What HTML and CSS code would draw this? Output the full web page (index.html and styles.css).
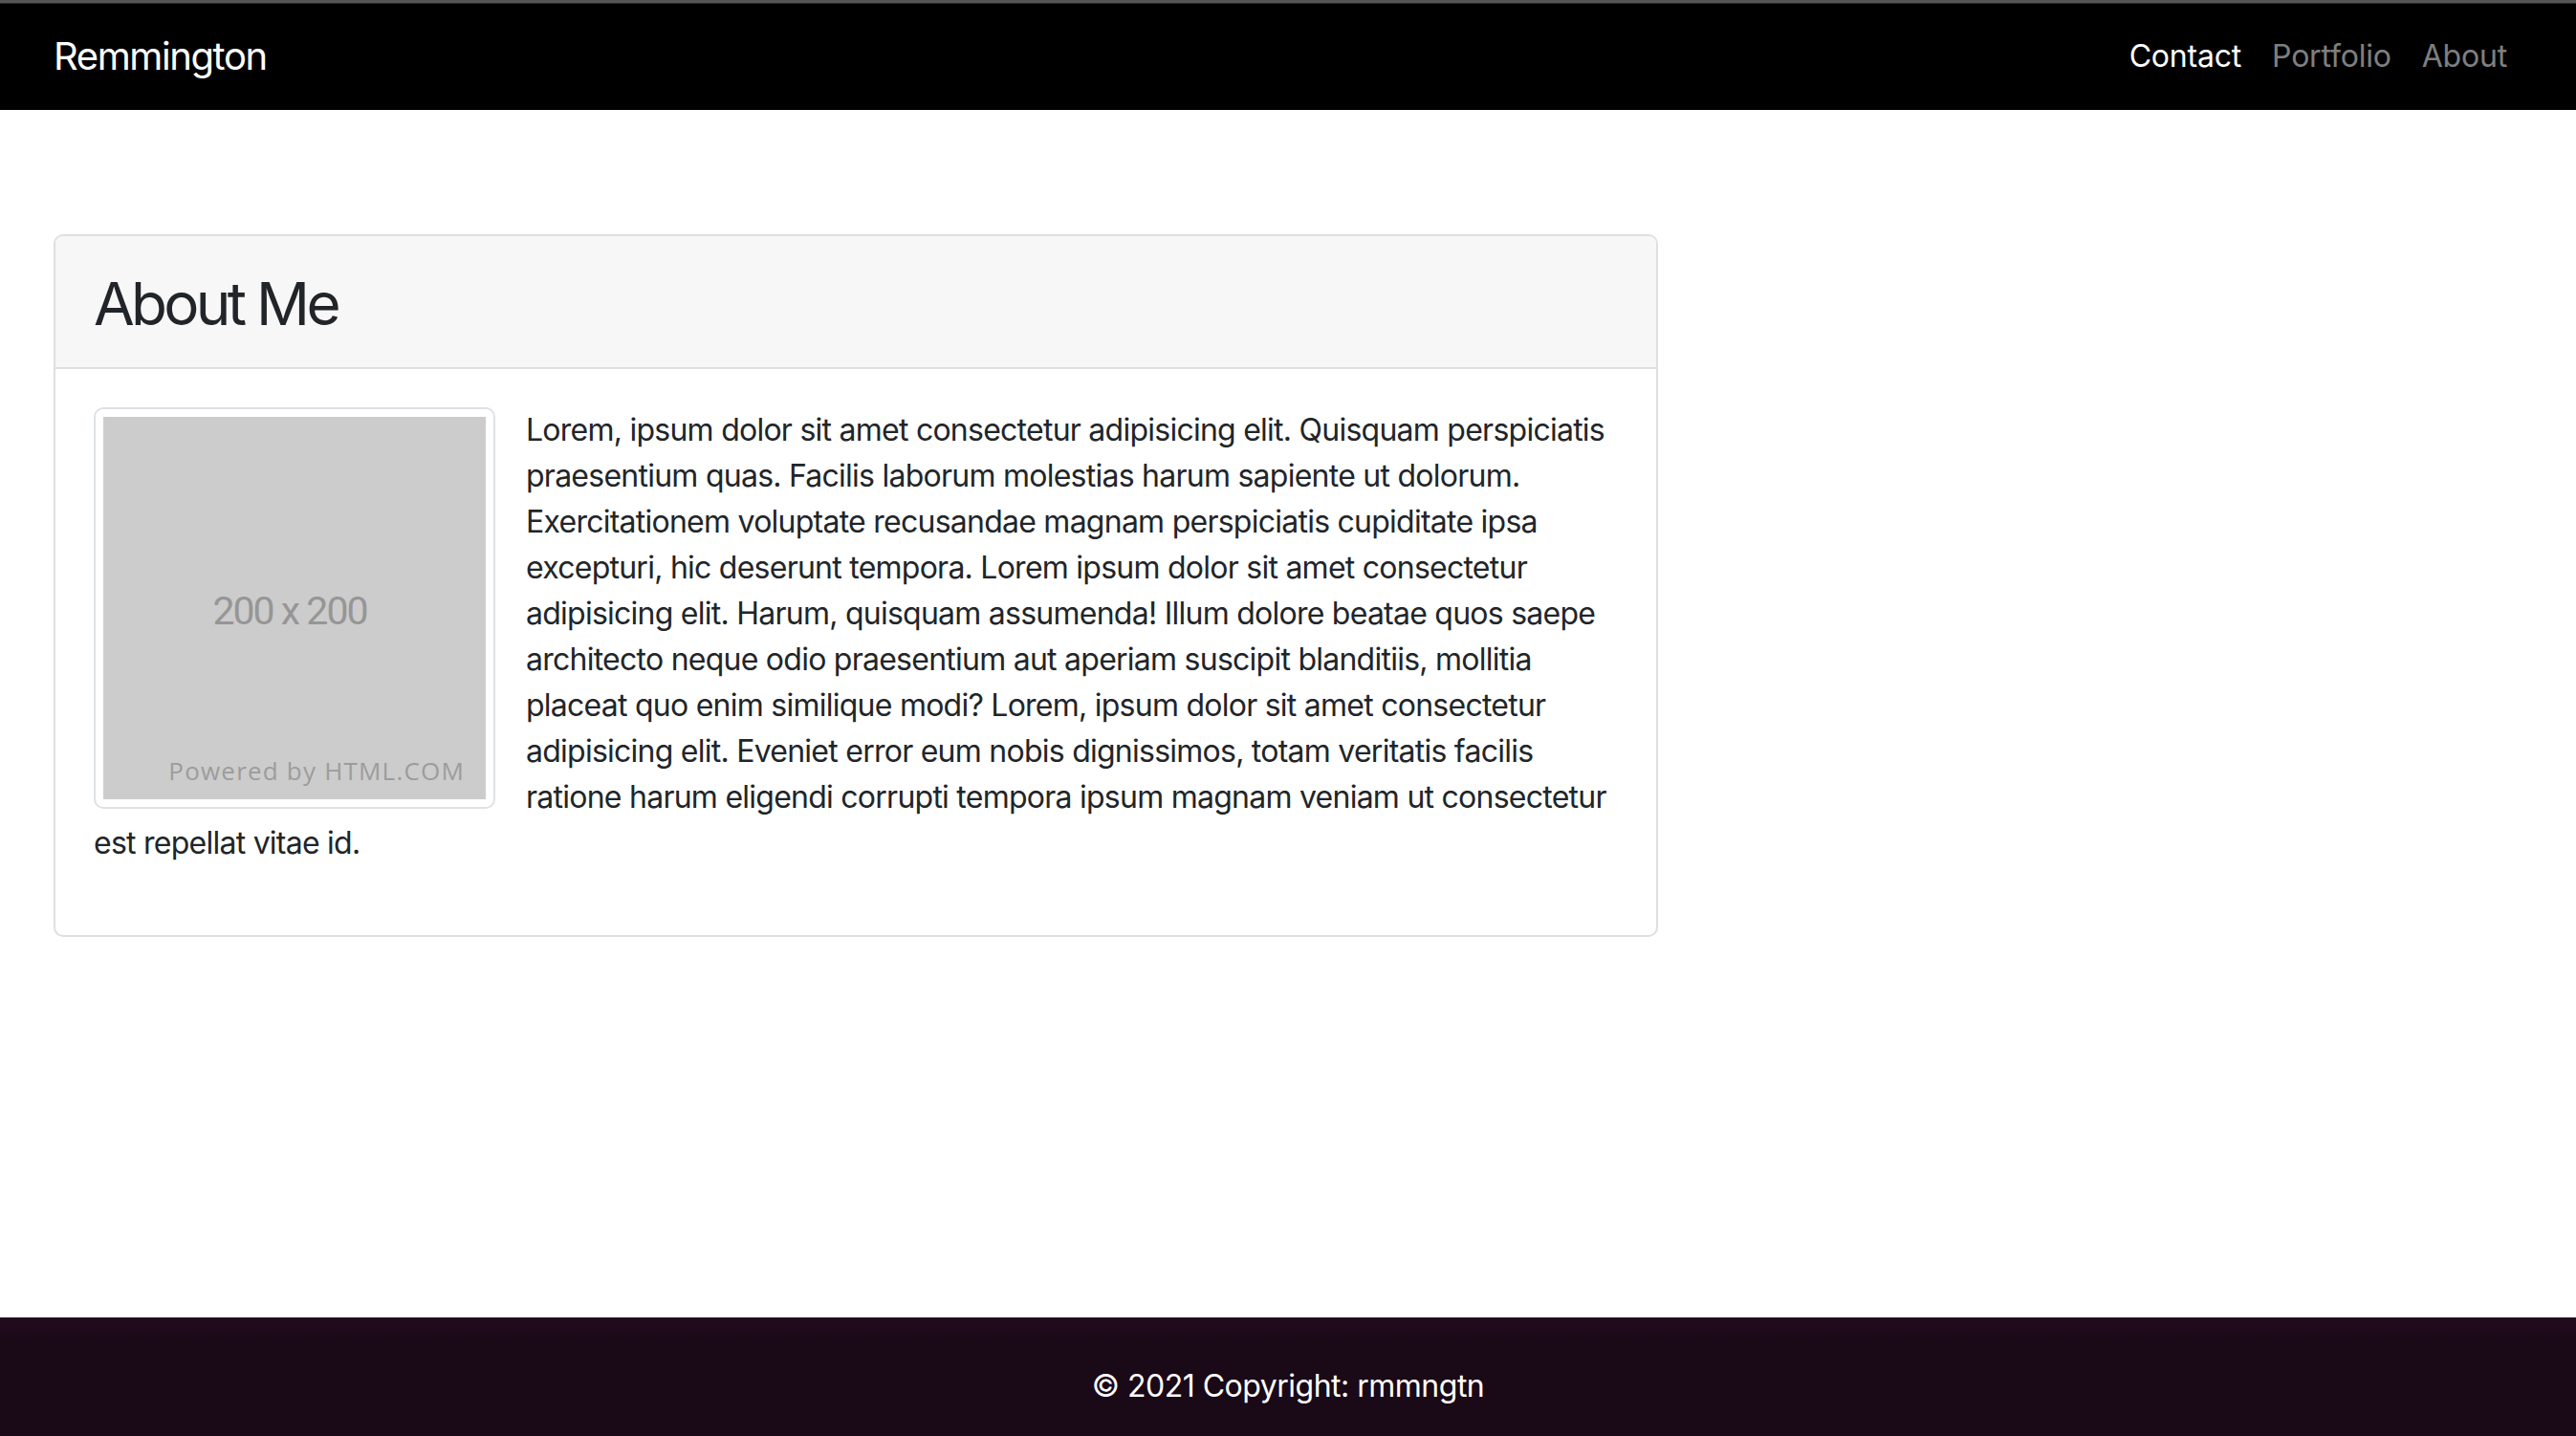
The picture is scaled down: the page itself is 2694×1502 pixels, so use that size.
FILE: index.html
```html
<!DOCTYPE html>
<html lang="en">
<head>
<meta charset="utf-8">
<title>Remmington</title>
<link rel="stylesheet" href="styles.css">
</head>
<body>
<header class="navbar">
  <a class="brand" href="#">Remmington</a>
  <nav class="nav">
    <a class="nav-link active" href="#">Contact</a>
    <a class="nav-link" href="#">Portfolio</a>
    <a class="nav-link" href="#">About</a>
  </nav>
</header>
<main class="main">
  <section class="card">
    <div class="card-header">
      <h2 class="title">About Me</h2>
    </div>
    <div class="card-body">
      <div class="thumb">
        <div class="placeholder">
          <span class="ph-size">200 x 200</span>
          <span class="ph-credit">Powered by HTML.COM</span>
        </div>
      </div>
      <p class="text">Lorem, ipsum dolor sit amet consectetur adipisicing elit. Quisquam perspiciatis praesentium quas. Facilis laborum molestias harum sapiente ut dolorum. Exercitationem voluptate recusandae magnam perspiciatis cupiditate ipsa excepturi, hic deserunt tempora. Lorem ipsum dolor sit amet consectetur adipisicing elit. Harum, quisquam assumenda! Illum dolore beatae quos saepe architecto neque odio praesentium aut aperiam suscipit blanditiis, mollitia placeat quo enim similique modi? Lorem, ipsum dolor sit amet consectetur adipisicing elit. Eveniet error eum nobis dignissimos, totam veritatis facilis ratione harum eligendi corrupti tempora ipsum magnam veniam ut consectetur est repellat vitae id.</p>
    </div>
  </section>
</main>
<footer class="footer">© 2021 Copyright: rmmngtn</footer>
</body>
</html>
```

FILE: styles.css
```css
* { box-sizing: border-box; }
html, body { margin: 0; padding: 0; }
body {
  font-family: Inter, "Noto Sans", "Liberation Sans", sans-serif;
  color: #212529;
  background: #fff;
  min-height: 100vh;
  display: flex;
  flex-direction: column;
}
a { text-decoration: none; }

.navbar {
  background: #000;
  border-top: 3px solid #555;
  box-shadow: inset 0 1px 0 #2a2a2a;
  height: 115px;
  display: flex;
  align-items: center;
  justify-content: space-between;
  padding: 0 56px 0 56px;
}
.brand {
  color: #fff;
  font-size: 40px;
  line-height: 60px;
  letter-spacing: -1.4px;
}
.nav { display: flex; }
.nav-link {
  color: rgba(255,255,255,.5);
  font-size: 32px;
  line-height: 48px;
  padding: 0 16px;
  letter-spacing: -0.2px;
}
.nav-link.active { color: #fff; }

.main {
  padding: 130px 0 0 56px;
}
.card {
  width: 1678px;
  border: 2px solid #dfdfdf;
  border-radius: 10px;
  overflow: hidden;
}
.card-header {
  background: #f7f7f7;
  border-bottom: 2px solid #dfdfdf;
  padding: 32px 40px 28px;
}
.title {
  margin: 0;
  font-size: 62px;
  font-weight: 400;
  line-height: 77px;
  letter-spacing: -3.7px;
}
.card-body {
  padding: 40px 40px 40px;
}
.card-body::after { content: ""; display: block; clear: both; }
.thumb {
  float: left;
  margin-right: 32px;
  padding: 8px;
  border: 2px solid #dee2e6;
  border-radius: 10px;
  background: #fff;
}
.placeholder {
  width: 400px;
  height: 400px;
  background: #cccccc;
  display: flex;
  flex-direction: column;
  align-items: center;
  justify-content: center;
  position: relative;
}
.ph-size {
  font-family: Roboto, "Liberation Sans", sans-serif;
  font-size: 41px;
  letter-spacing: -2px;
  color: #969696;
  margin: 6px 10px 0 0;
}
.ph-credit {
  position: absolute;
  right: 22px;
  bottom: 12px;
  font-family: "Open Sans", "Liberation Sans", sans-serif;
  font-size: 26px;
  letter-spacing: 1.2px;
  color: #9c9c9c;
}
.text {
  margin: 0 0 32px;
  font-size: 32px;
  line-height: 48px;
  letter-spacing: -0.75px;
}

.footer {
  margin-top: auto;
  height: 124px;
  padding-top: 48px;
  background: linear-gradient(#210b1d, #1a0916 30px);
  color: #fff;
  font-size: 32px;
  line-height: 48px;
  text-align: center;
  letter-spacing: -0.5px;
}
```
